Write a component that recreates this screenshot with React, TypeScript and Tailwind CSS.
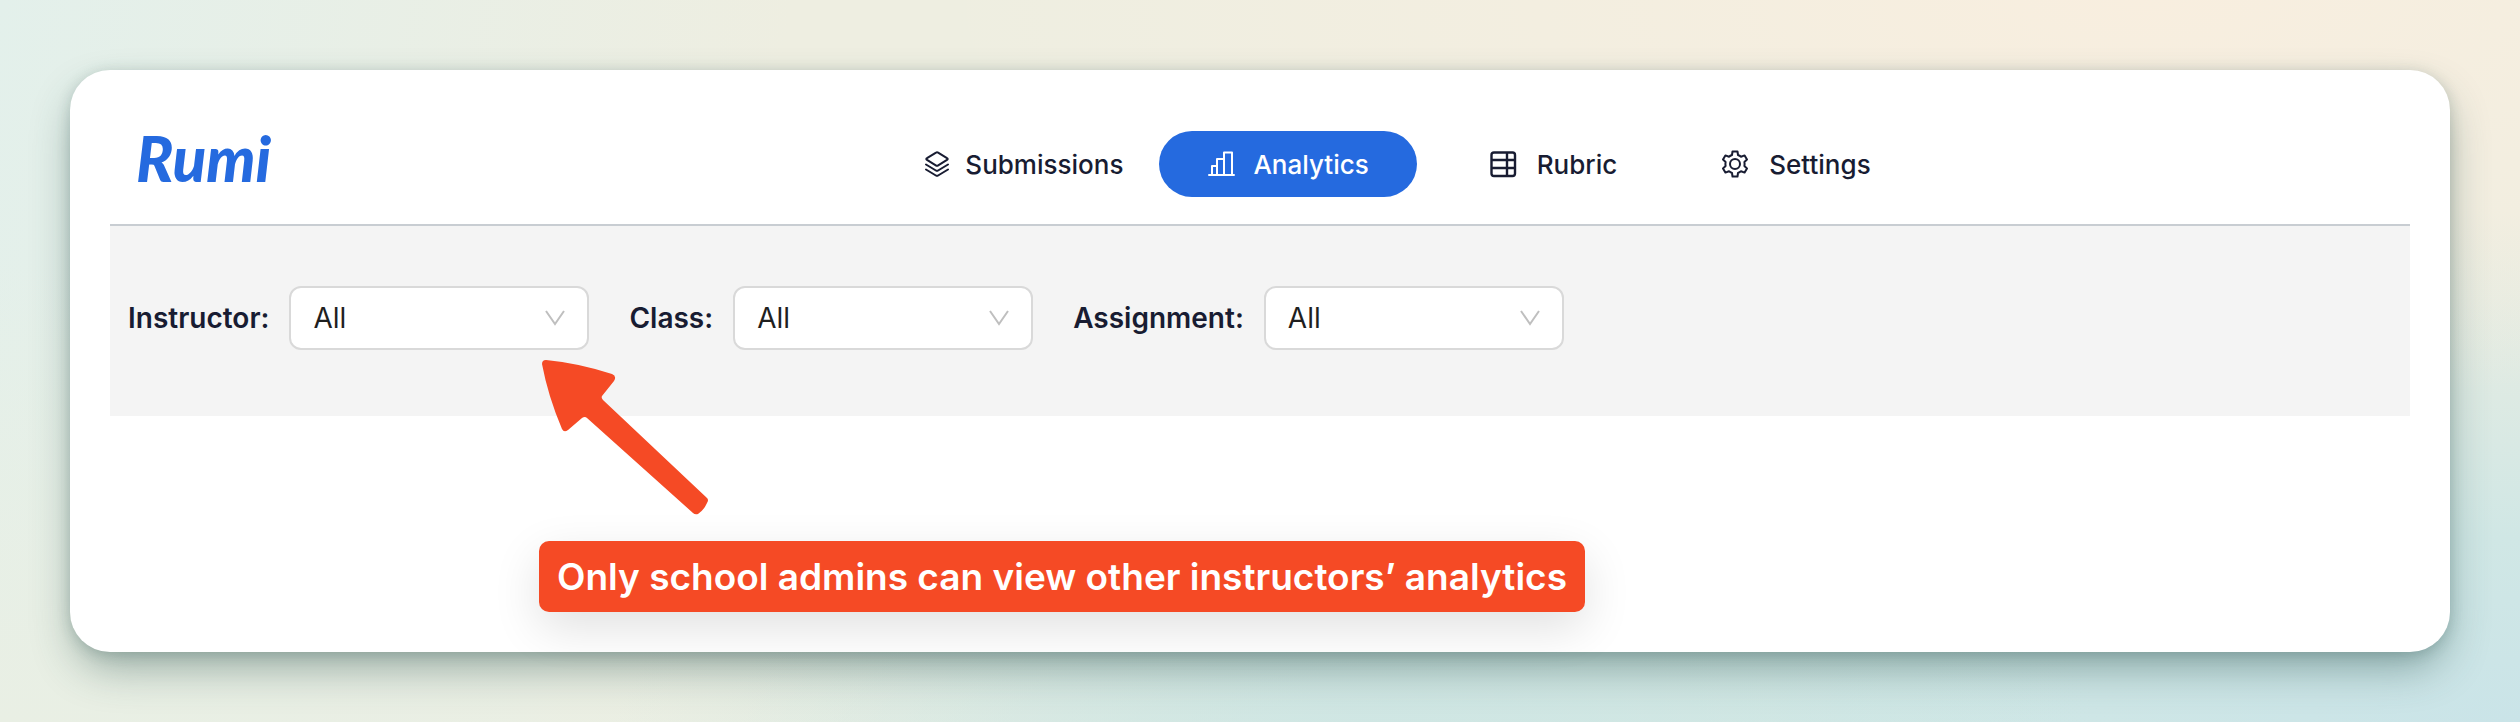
import { ReactNode } from "react";

interface NavItemProps {
  label: string;
  icon: ReactNode;
  className: string;
}

interface FilterProps {
  id: string;
  label: string;
}

const LayersIcon = () => (
  <svg className="h-7 w-6 shrink-0" viewBox="0 0 24 28" fill="none" stroke="currentColor" strokeWidth="2" strokeLinejoin="round" strokeLinecap="round" aria-hidden="true">
    <path d="M11 2.6 2 8.2Q.6 9 2 9.9L10.8 15.4Q12 16.2 13.2 15.4L22 9.9Q23.4 9 22 8.2L13.1 2.6Q12 1.9 11 2.6Z" />
    <path d="m1 14.5 9.900 6q1.100.7 2.200 0l9.900-6" />
    <path d="m1 19.500 9.900 6q1.100.7 2.200 0l9.900-6" />
  </svg>
);

const ChartIcon = () => (
  <svg className="h-7 w-7 shrink-0" viewBox="0 0 28 28" fill="none" stroke="currentColor" strokeWidth="2" strokeLinejoin="round" strokeLinecap="round" aria-hidden="true">
    <path d="M2 25H27M5 25V16H10M10 25V9H17M17 25V2.500H25V25" />
  </svg>
);

const TableIcon = () => (
  <svg className="h-7 w-7 shrink-0" viewBox="0 0 28 28" fill="none" stroke="currentColor" strokeWidth="2.4" aria-hidden="true">
    <rect x="2.5" y="2.5" width="23.5" height="23.5" rx="2.5" />
    <path d="M18 2V26M2 10H26M2 18H26" />
  </svg>
);

const GearIcon = () => (
  <svg className="h-7 w-7 shrink-0" viewBox="0 0 28 28" fill="none" stroke="currentColor" strokeWidth="2" strokeLinejoin="round" aria-hidden="true">
    <path d="M11.5 1.5H16.5L17 5Q18.7 5.6 20 6.7L23.6 5.4L26 9.6L23.4 12Q23.8 14 23.4 16L26 18.4L23.6 22.6L20 21.3Q18.7 22.4 17 23L16.5 26.5H11.5L11 23Q9.3 22.4 8 21.3L4.4 22.6L2 18.4L4.6 16Q4.2 14 4.6 12L2 9.6L4.4 5.4L8 6.7Q9.3 5.6 11 5Z" />
    <circle cx="14" cy="14" r="5" />
  </svg>
);

const NavItem = ({ label, icon, className }: NavItemProps) => (
  <a href="#" className={`flex h-[66px] items-center rounded-full text-[26px] font-medium ${className}`}>
    {icon}
    <span>{label}</span>
  </a>
);

const Filter = ({ id, label }: FilterProps) => (
  <div className="flex items-center gap-5">
    <label htmlFor={id} className="text-[28px] font-semibold">
      {label}:
    </label>
    <div className="relative">
      <select
        id={id}
        className="block h-16 w-[300px] appearance-none rounded-xl border-2 border-[#d9d9d9] bg-white pl-[22px] text-[28px] text-[#1f1f1f]"
      >
        <option>All</option>
      </select>
      <svg className="pointer-events-none absolute top-6 right-6 h-4 w-5" viewBox="0 0 20 16" fill="none" stroke="#bfbfbf" strokeWidth="2" aria-hidden="true">
        <path d="M1 1 10 14 19 1" />
      </svg>
    </div>
  </div>
);

export default function App() {
  return (
    <div className="min-h-screen bg-[radial-gradient(ellipse_at_85%_0%,#f8eedf_0%,transparent_40%),radial-gradient(ellipse_at_54%_115%,#cbe5e3_0%,transparent_40%),radial-gradient(ellipse_at_100%_100%,#cae4e8_0%,#d0e7e5_18%,transparent_50%),radial-gradient(ellipse_at_0%_100%,#e9efe4_0%,transparent_45%),linear-gradient(100deg,#e3f0eb_0%,#eeeee1_30%,#eeeee1_100%)] p-[70px] font-[Inter,sans-serif] text-[#181c32]">
      <main className="rounded-[40px] bg-white px-10 pb-10 shadow-[0_2px_14px_rgba(40,80,75,0.2),0_20px_44px_-6px_rgba(40,80,75,0.45)]">
        <header className="flex items-center border-b-2 border-[#c8cdd2] pt-[61px] pb-[27px]">
          <a href="#" className="w-[292px] shrink-0 pb-3 pl-[26px] font-[Lato,sans-serif] text-[62px] leading-[54px] font-black text-[#256adf] italic">
            Rumi
          </a>
          <nav className="flex flex-1 items-center justify-center">
            <NavItem label="Submissions" icon={<LayersIcon />} className="gap-4 px-9" />
            <NavItem label="Analytics" icon={<ChartIcon />} className="gap-[18px] bg-[#256adf] px-12 text-white" />
            <NavItem label="Rubric" icon={<TableIcon />} className="gap-5 pr-13 pl-18" />
            <NavItem label="Settings" icon={<GearIcon />} className="gap-5 px-13" />
          </nav>
        </header>

        <section className="flex gap-10 bg-[#f4f4f4] pt-15 pr-4 pb-[66px] pl-[18px]">
          <Filter id="instructor" label="Instructor" />
          <Filter id="class" label="Class" />
          <Filter id="assignment" label="Assignment" />
        </section>

        <div className="relative flex pt-[125px] pl-[429px]">
          {/* arrow pointing at the instructor filter */}
          <svg className="absolute -top-14 left-[432px] h-[156px] w-[168px]" viewBox="0 0 168 156" fill="#f54a25" aria-hidden="true">
            <path d="M0 4Q0 0 4 0Q36 3 70 14Q75 16 72 21L60 36Q59 38 61 40L165 138Q167 140 165 143Q162 150 156 154Q153 155 151 153L45 58Q43 56 40 58L26 70Q22 73 20 69Q6 36 0 4Z" />
          </svg>
          <p className="rounded-[10px] bg-[#f54a25] px-[18px] py-3 text-[37px] leading-[47px] font-semibold whitespace-nowrap text-white shadow-[0_16px_48px_rgba(0,0,0,0.12)]">
            Only school admins can view other instructors’ analytics
          </p>
        </div>
      </main>
    </div>
  );
}
